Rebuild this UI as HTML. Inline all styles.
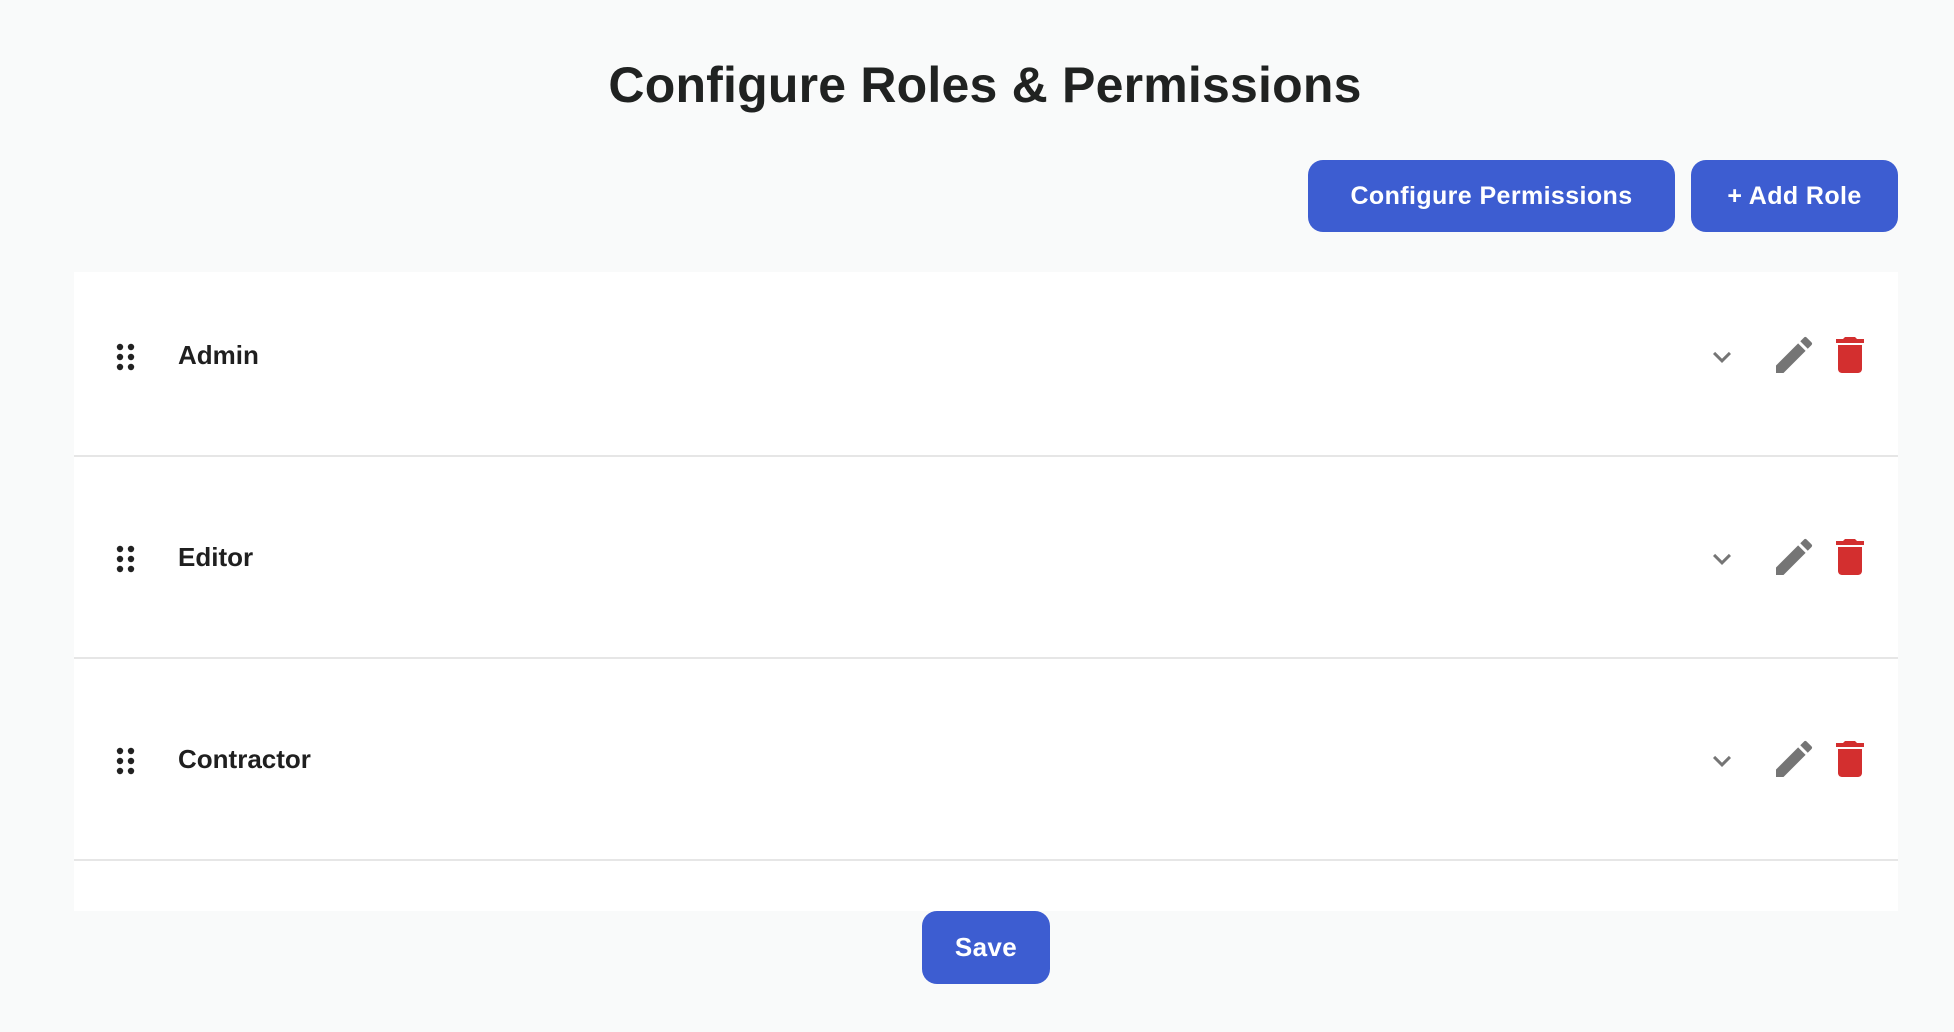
<!DOCTYPE html>
<html><head><meta charset="utf-8"><style>
body{margin:0;width:1954px;height:1032px;background:#f9fafa;font-family:"Liberation Sans",sans-serif;position:relative;overflow:hidden;color:#212121}
h1{position:absolute;top:51px;left:0;width:1970px;text-align:center;margin:0;font-size:50px;font-weight:bold;line-height:68px;color:#202221;letter-spacing:0.2px}
.btn{position:absolute;background:#3d5dd1;color:#fff;border-radius:15px;font-size:25px;font-weight:bold;display:flex;align-items:center;justify-content:center;letter-spacing:0.4px}
.card{position:absolute;left:74px;top:272px;width:1824px;height:639px;background:#fff}
.row{position:absolute;left:0;width:1824px;border-bottom:2px solid #e6e6e6}
.name{position:absolute;font-size:26px;font-weight:bold;color:#1f1f1f}
.ic{position:absolute}
</style></head><body>
<h1>Configure Roles &amp; Permissions</h1>
<div class="btn" style="left:1308px;top:160px;width:367px;height:72px">Configure Permissions</div>
<div class="btn" style="left:1691px;top:160px;width:207px;height:72px">+ Add Role</div>
<div class="card">
<div class="row" style="top:0;height:183px"></div>
<div class="row" style="top:185px;height:200px"></div>
<div class="row" style="top:387px;height:200px"></div>
</div>
<div class="btn" style="left:922px;top:911px;width:128px;height:73px;font-size:26px">Save</div>

<div style="position:absolute;left:0;top:357px">
<svg class="ic" style="left:113px;top:-15px" width="26" height="30" viewBox="0 0 26 30"><g fill="#222"><circle cx="7" cy="5" r="3.2"/><circle cx="18" cy="5" r="3.2"/><circle cx="7" cy="15" r="3.2"/><circle cx="18" cy="15" r="3.2"/><circle cx="7" cy="25" r="3.2"/><circle cx="18" cy="25" r="3.2"/></g></svg>
<div class="name" style="left:178px;top:-17px">Admin</div>
<svg class="ic" style="left:1704px;top:-18px" width="36" height="36" viewBox="0 0 24 24"><path fill="#757575" d="M16.59 8.59L12 13.17 7.41 8.59 6 10l6 6 6-6z"/></svg>
<svg class="ic" style="left:1770px;top:-26px" width="48" height="48" viewBox="0 0 24 24"><path fill="#757575" d="M3 17.25V21h3.75L17.81 9.94l-3.75-3.75L3 17.25zM20.71 7.04a1 1 0 000-1.41l-2.34-2.34a1 1 0 00-1.41 0l-1.83 1.83 3.75 3.75 1.83-1.83z"/></svg>
<svg class="ic" style="left:1826px;top:-26px" width="48" height="48" viewBox="0 0 24 24"><path fill="#d32f2f" d="M6 19c0 1.1.9 2 2 2h8c1.1 0 2-.9 2-2V7H6v12zM19 4h-3.5l-1-1h-5l-1 1H5v2h14V4z"/></svg>
</div>
<div style="position:absolute;left:0;top:559px">
<svg class="ic" style="left:113px;top:-15px" width="26" height="30" viewBox="0 0 26 30"><g fill="#222"><circle cx="7" cy="5" r="3.2"/><circle cx="18" cy="5" r="3.2"/><circle cx="7" cy="15" r="3.2"/><circle cx="18" cy="15" r="3.2"/><circle cx="7" cy="25" r="3.2"/><circle cx="18" cy="25" r="3.2"/></g></svg>
<div class="name" style="left:178px;top:-17px">Editor</div>
<svg class="ic" style="left:1704px;top:-18px" width="36" height="36" viewBox="0 0 24 24"><path fill="#757575" d="M16.59 8.59L12 13.17 7.41 8.59 6 10l6 6 6-6z"/></svg>
<svg class="ic" style="left:1770px;top:-26px" width="48" height="48" viewBox="0 0 24 24"><path fill="#757575" d="M3 17.25V21h3.75L17.81 9.94l-3.75-3.75L3 17.25zM20.71 7.04a1 1 0 000-1.41l-2.34-2.34a1 1 0 00-1.41 0l-1.83 1.83 3.75 3.75 1.83-1.83z"/></svg>
<svg class="ic" style="left:1826px;top:-26px" width="48" height="48" viewBox="0 0 24 24"><path fill="#d32f2f" d="M6 19c0 1.1.9 2 2 2h8c1.1 0 2-.9 2-2V7H6v12zM19 4h-3.5l-1-1h-5l-1 1H5v2h14V4z"/></svg>
</div>
<div style="position:absolute;left:0;top:761px">
<svg class="ic" style="left:113px;top:-15px" width="26" height="30" viewBox="0 0 26 30"><g fill="#222"><circle cx="7" cy="5" r="3.2"/><circle cx="18" cy="5" r="3.2"/><circle cx="7" cy="15" r="3.2"/><circle cx="18" cy="15" r="3.2"/><circle cx="7" cy="25" r="3.2"/><circle cx="18" cy="25" r="3.2"/></g></svg>
<div class="name" style="left:178px;top:-17px">Contractor</div>
<svg class="ic" style="left:1704px;top:-18px" width="36" height="36" viewBox="0 0 24 24"><path fill="#757575" d="M16.59 8.59L12 13.17 7.41 8.59 6 10l6 6 6-6z"/></svg>
<svg class="ic" style="left:1770px;top:-26px" width="48" height="48" viewBox="0 0 24 24"><path fill="#757575" d="M3 17.25V21h3.75L17.81 9.94l-3.75-3.75L3 17.25zM20.71 7.04a1 1 0 000-1.41l-2.34-2.34a1 1 0 00-1.41 0l-1.83 1.83 3.75 3.75 1.83-1.83z"/></svg>
<svg class="ic" style="left:1826px;top:-26px" width="48" height="48" viewBox="0 0 24 24"><path fill="#d32f2f" d="M6 19c0 1.1.9 2 2 2h8c1.1 0 2-.9 2-2V7H6v12zM19 4h-3.5l-1-1h-5l-1 1H5v2h14V4z"/></svg>
</div>
</body></html>
